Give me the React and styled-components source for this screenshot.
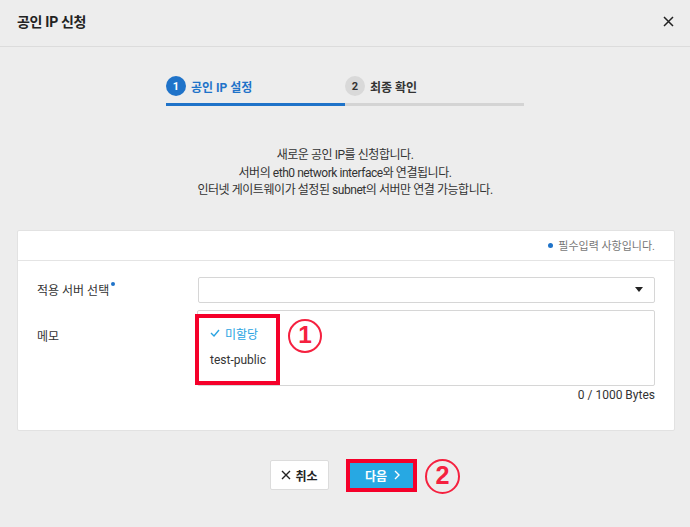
import styled, { createGlobalStyle } from "styled-components";

const GlobalStyle = createGlobalStyle`
  html, body {
    margin: 0;
    padding: 0;
    background: #ededed;
  }
  body {
    font-family: Roboto, "Noto Sans CJK KR", sans-serif;
    color: #333;
  }
  * { box-sizing: border-box; }
`;

const Page = styled.div`
  width: 690px;
  height: 527px;
  background: #ededed;
  overflow: hidden;
`;

const Header = styled.div`
  height: 47px;
  border-bottom: 1px solid #dcdcdc;
  display: flex;
  align-items: center;
  justify-content: space-between;
  padding: 0 14px 4px 17px;
`;

const Title = styled.h1`
  margin: 0;
  font-size: 14px;
  font-weight: 700;
  color: #222;
  letter-spacing: -0.3px;
`;

const CloseButton = styled.button`
  border: 0;
  background: none;
  padding: 0;
  width: 16px;
  height: 16px;
  display: flex;
  align-items: center;
  justify-content: center;
  cursor: pointer;
`;

const Stepper = styled.div`
  display: flex;
  width: 358px;
  margin: 29px auto 0;
`;

const Step = styled.div`
  flex: 1;
  display: flex;
  align-items: center;
  gap: 5px;
  padding-bottom: 7px;
  border-bottom: 3px solid ${(p) => (p.$active ? "#1f73c9" : "#d4d4d4")};
`;

const StepNum = styled.span`
  width: 20px;
  height: 20px;
  border-radius: 50%;
  background: ${(p) => (p.$active ? "#1f73c9" : "#d9d9d9")};
  color: ${(p) => (p.$active ? "#fff" : "#333")};
  font-size: 11px;
  font-weight: 700;
  display: flex;
  align-items: center;
  justify-content: center;
`;

const StepLabel = styled.span`
  font-size: 12px;
  font-weight: 700;
  color: ${(p) => (p.$active ? "#1f73c9" : "#333")};
`;

const Description = styled.p`
  margin: 41px 0 0;
  text-align: center;
  font-size: 12px;
  line-height: 17.5px;
  letter-spacing: -0.45px;
  color: #333;
`;

const Card = styled.div`
  margin: 30px 15px 0 17px;
  background: #fff;
  border: 1px solid #e2e2e2;
  border-radius: 2px;
`;

const CardHeader = styled.div`
  height: 30px;
  border-bottom: 1px solid #e4e4e4;
  display: flex;
  align-items: center;
  justify-content: flex-end;
  padding: 0 19px;
  font-size: 11px;
  color: #777;
  gap: 5px;
`;

const Dot = styled.span`
  width: 5px;
  height: 5px;
  border-radius: 50%;
  background: #1f73c9;
  display: inline-block;
`;

const CardBody = styled.div`
  padding: 16px 19px 28px 19px;
  display: flex;
  flex-direction: column;
  gap: 7px;
`;

const Row = styled.div`
  display: grid;
  grid-template-columns: 161px 1fr;
  align-items: ${(p) => (p.$top ? "start" : "center")};
`;

const Label = styled.label`
  font-size: 12px;
  color: #333;
  padding-top: ${(p) => (p.$top ? "17px" : "0")};
  display: flex;
  align-items: flex-start;
  gap: 2px;
`;

const LabelDot = styled(Dot)`
  width: 4px;
  height: 4px;
  margin-top: 1px;
`;

const Field = styled.div`
  position: relative;
`;

const Select = styled.div`
  height: 26px;
  border: 1px solid #d6d6d6;
  border-radius: 2px;
  display: flex;
  align-items: center;
  justify-content: flex-end;
  padding-right: 11px;
`;

const Caret = styled.span`
  width: 0;
  height: 0;
  border-left: 4px solid transparent;
  border-right: 4px solid transparent;
  border-top: 5px solid #222;
`;

const TextArea = styled.div`
  height: 76px;
  border: 1px solid #d6d6d6;
  border-radius: 2px;
  margin-left: -1px;
`;

const Counter = styled.div`
  text-align: right;
  font-size: 12px;
  color: #333;
  margin-top: 2px;
`;

const Dropdown = styled.ul`
  position: absolute;
  left: -3px;
  top: 4px;
  width: 85px;
  height: 71px;
  margin: 0;
  padding: 2px 0 0 11px;
  list-style: none;
  background: #fff;
  border: 4px solid #f5002a;
`;

const Option = styled.li`
  height: 27px;
  display: flex;
  align-items: center;
  gap: 5px;
  font-size: 12px;
  color: ${(p) => (p.$selected ? "#2aa4e2" : "#333")};
`;

const Marker = styled.span`
  position: absolute;
  width: ${(p) => p.$size}px;
  height: ${(p) => p.$size}px;
  border: 2px solid #f5213f;
  border-radius: 50%;
  color: #f5213f;
  font-family: "Liberation Sans", Arial, sans-serif;
  font-weight: 700;
  font-size: ${(p) => p.$size * 0.72}px;
  display: flex;
  align-items: center;
  justify-content: center;
  line-height: 1;
`;

const MemoMarker = styled(Marker)`
  left: 90px;
  top: 9px;
`;

const Footer = styled.div`
  display: flex;
  justify-content: center;
  align-items: center;
  margin-top: 28px;
  padding-right: 3px;
`;

const CancelButton = styled.button`
  height: 30px;
  width: 59px;
  background: #fff;
  border: 1px solid #dcdcdc;
  border-radius: 2px;
  font-family: inherit;
  font-size: 12px;
  font-weight: 700;
  color: #222;
  display: flex;
  align-items: center;
  justify-content: center;
  gap: 4px;
  padding: 0;
`;

const NextWrap = styled.div`
  position: relative;
  margin-left: 17px;
  border: 4px solid #f5002a;
`;

const NextButton = styled.button`
  height: 25px;
  width: 63px;
  background: #27a8e3;
  border: 0;
  font-family: inherit;
  font-size: 12px;
  font-weight: 700;
  color: #fff;
  display: flex;
  align-items: center;
  justify-content: center;
  gap: 7px;
  padding: 0 0 0 2px;
`;

const NextMarker = styled(Marker)`
  left: 75px;
  top: -4px;
`;

export default function App() {
  return (
    <Page>
      <GlobalStyle />
      <Header>
        <Title>공인 IP 신청</Title>
        <CloseButton aria-label="close">
          <svg width="11" height="11" viewBox="0 0 11 11">
            <path d="M1 1L10 10M10 1L1 10" stroke="#222" strokeWidth="1.5" />
          </svg>
        </CloseButton>
      </Header>

      <Stepper>
        <Step $active>
          <StepNum $active>1</StepNum>
          <StepLabel $active>공인 IP 설정</StepLabel>
        </Step>
        <Step>
          <StepNum>2</StepNum>
          <StepLabel>최종 확인</StepLabel>
        </Step>
      </Stepper>

      <Description>
        새로운 공인 IP를 신청합니다.
        <br />
        서버의 eth0 network interface와 연결됩니다.
        <br />
        인터넷 게이트웨이가 설정된 subnet의 서버만 연결 가능합니다.
      </Description>

      <Card>
        <CardHeader>
          <Dot />
          필수입력 사항입니다.
        </CardHeader>
        <CardBody>
          <Row>
            <Label>
              적용 서버 선택
              <LabelDot />
            </Label>
            <Select>
              <Caret />
            </Select>
          </Row>
          <Row $top>
            <Label $top>메모</Label>
            <Field>
              <TextArea />
              <Counter>0 / 1000 Bytes</Counter>
              <Dropdown>
                <Option $selected>
                  <svg width="10" height="8" viewBox="0 0 10 8">
                    <path d="M1 4L4 7L9 1" stroke="#2aa4e2" strokeWidth="1.4" fill="none" />
                  </svg>
                  미할당
                </Option>
                <Option>test-public</Option>
              </Dropdown>
              <MemoMarker $size={34}>1</MemoMarker>
            </Field>
          </Row>
        </CardBody>
      </Card>

      <Footer>
        <CancelButton>
          <svg width="10" height="10" viewBox="0 0 10 10">
            <path d="M1 1L9 9M9 1L1 9" stroke="#222" strokeWidth="1.4" />
          </svg>
          취소
        </CancelButton>
        <NextWrap>
          <NextButton>
            다음
            <svg width="6" height="10" viewBox="0 0 6 10">
              <path d="M1 1L5 5L1 9" stroke="#fff" strokeWidth="1.4" fill="none" />
            </svg>
          </NextButton>
          <NextMarker $size={35}>2</NextMarker>
        </NextWrap>
      </Footer>
    </Page>
  );
}
